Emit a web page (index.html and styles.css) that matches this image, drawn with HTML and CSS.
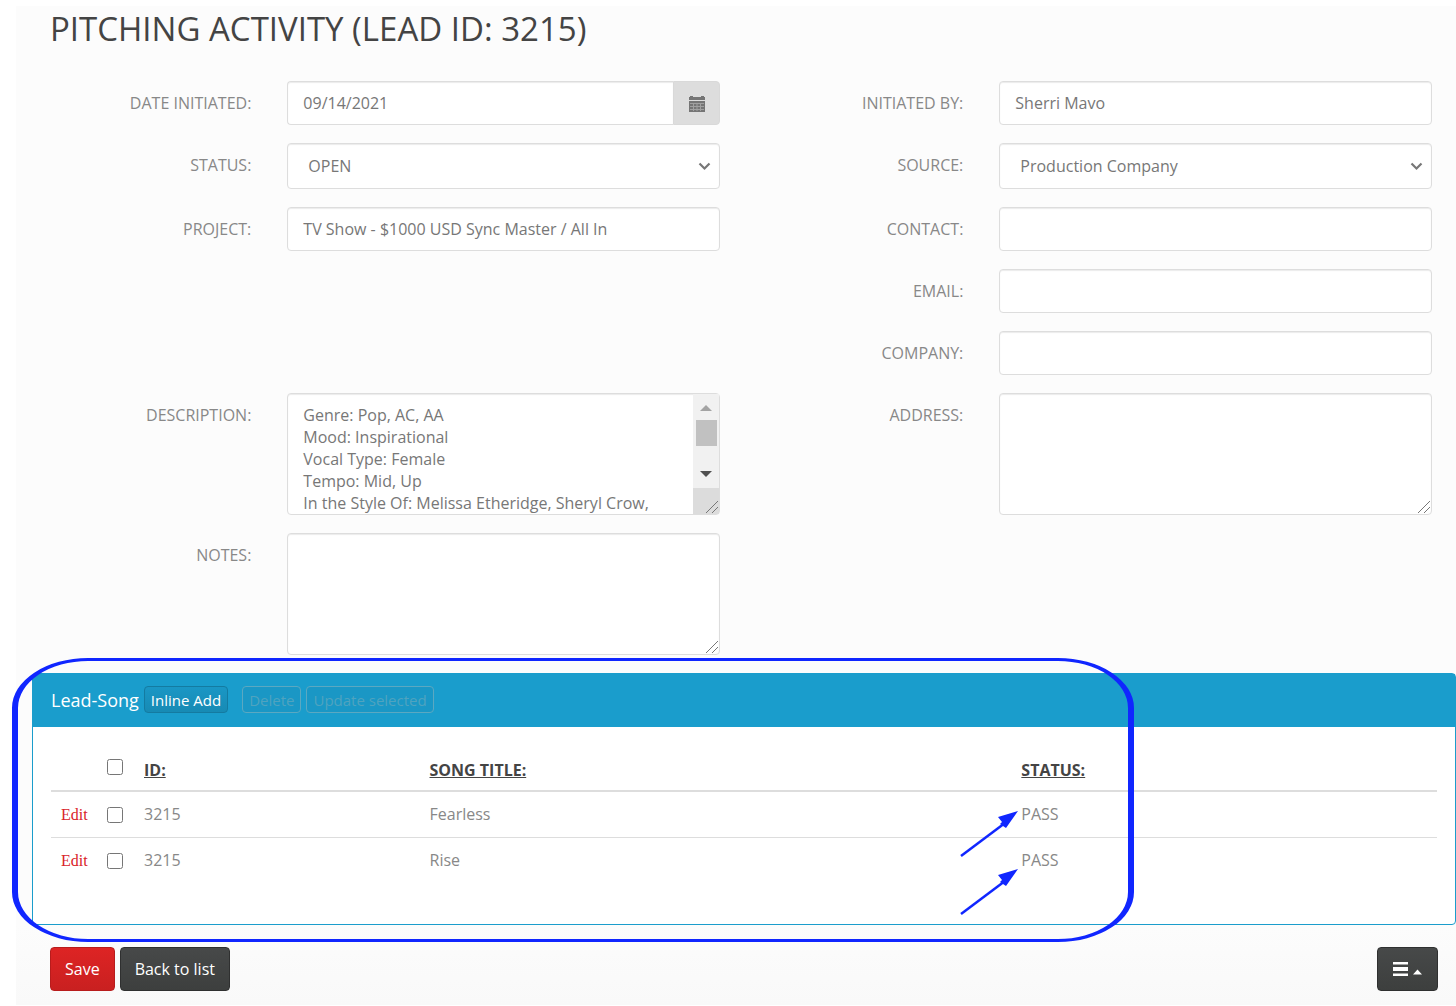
FILE: index.html
```html
<!DOCTYPE html>
<html lang="en">
<head>
<meta charset="utf-8">
<title>Pitching Activity</title>
<link rel="stylesheet" href="styles.css">
</head>
<body>
<main class="page">
  <h1>PITCHING ACTIVITY (LEAD ID: 3215)</h1>
  <form>
    <div class="fields">
      <div class="field left">
        <label for="date">DATE INITIATED:</label>
        <div class="control group">
          <input id="date" class="input" type="text" value="09/14/2021">
          <button class="addon" type="button" aria-label="Choose date">
            <svg width="16" height="17" viewBox="0 0 16 17"><path fill="#757575" d="M0 2h1V1h3v1h8V1h3v1h1v3H0zM0 6h16v11H0z"/><path stroke="#a0a0a0" d="M1 8.500h14M1 11.500h14M1 14.500h14M4.500 8v8M8 8v8M11.500 8v8"/></svg>
          </button>
        </div>
      </div>
      <div class="field right">
        <label for="by">INITIATED BY:</label>
        <div class="control"><input id="by" class="input" type="text" value="Sherri Mavo"></div>
      </div>
      <div class="field left">
        <label for="status">STATUS:</label>
        <div class="control">
          <select id="status" class="input select"><option>OPEN</option></select>
          <svg class="chevron" width="13" height="9" viewBox="0 0 13 9"><path d="M1.500 1.500l5 5 5-5" fill="none" stroke="#777" stroke-width="2.200"/></svg>
        </div>
      </div>
      <div class="field right">
        <label for="source">SOURCE:</label>
        <div class="control">
          <select id="source" class="input select"><option>Production Company</option></select>
          <svg class="chevron" width="13" height="9" viewBox="0 0 13 9"><path d="M1.500 1.500l5 5 5-5" fill="none" stroke="#777" stroke-width="2.200"/></svg>
        </div>
      </div>
      <div class="field left">
        <label for="project">PROJECT:</label>
        <div class="control"><input id="project" class="input" type="text" value="TV Show - $1000 USD Sync Master / All In"></div>
      </div>
      <div class="field right">
        <label for="contact">CONTACT:</label>
        <div class="control"><input id="contact" class="input" type="text"></div>
      </div>
      <div class="field right">
        <label for="email">EMAIL:</label>
        <div class="control"><input id="email" class="input" type="text"></div>
      </div>
      <div class="field right">
        <label for="company">COMPANY:</label>
        <div class="control"><input id="company" class="input" type="text"></div>
      </div>
      <div class="field left">
        <label for="description">DESCRIPTION:</label>
        <div class="control">
          <textarea id="description" class="input area scrolled">Genre: Pop, AC, AA
Mood: Inspirational
Vocal Type: Female
Tempo: Mid, Up
In the Style Of: Melissa Etheridge, Sheryl Crow,</textarea>
          <div class="scrollbar">
            <span class="arrow up"></span><span class="thumb"></span><span class="arrow down"></span><span class="corner"></span>
          </div>
          <svg class="grip" width="14" height="14" viewBox="0 0 14 14"><path d="M1 13L13 1M7 13l6-6" stroke="#777" fill="none"/></svg>
        </div>
      </div>
      <div class="field right">
        <label for="address">ADDRESS:</label>
        <div class="control">
          <textarea id="address" class="input area"></textarea>
          <svg class="grip" width="14" height="14" viewBox="0 0 14 14"><path d="M1 13L13 1M7 13l6-6" stroke="#777" fill="none"/></svg>
        </div>
      </div>
      <div class="field left">
        <label for="notes">NOTES:</label>
        <div class="control">
          <textarea id="notes" class="input area"></textarea>
          <svg class="grip" width="14" height="14" viewBox="0 0 14 14"><path d="M1 13L13 1M7 13l6-6" stroke="#777" fill="none"/></svg>
        </div>
      </div>
    </div>

    <section class="panel">
      <header class="panel-head">
        <h2>Lead-Song</h2>
        <button class="small add" type="button">Inline Add</button>
        <button class="small" type="button" disabled>Delete</button>
        <button class="small" type="button" disabled>Update selected</button>
      </header>
      <div class="panel-body">
        <table>
          <colgroup><col class="c-edit"><col class="c-check"><col class="c-id"><col class="c-song"><col></colgroup>
          <thead>
            <tr><th></th><th><input type="checkbox" aria-label="Select all"></th><th><a href="#">ID:</a></th><th><a href="#">SONG TITLE:</a></th><th><a href="#">STATUS:</a></th></tr>
          </thead>
          <tbody>
            <tr><td><a class="edit" href="#">Edit</a></td><td><input type="checkbox" aria-label="Select Fearless"></td><td>3215</td><td>Fearless</td><td>PASS</td></tr>
            <tr><td><a class="edit" href="#">Edit</a></td><td><input type="checkbox" aria-label="Select Rise"></td><td>3215</td><td>Rise</td><td>PASS</td></tr>
          </tbody>
        </table>
      </div>
      <div class="callout"></div>
      <svg class="pointer first" width="60" height="48" viewBox="0 0 60 48"><path d="M2 46L46 13" stroke="#1026ff" stroke-width="2.500"/><path d="M59 1L39 7l4 5-2 2 6 4z" fill="#1026ff"/></svg>
      <svg class="pointer second" width="60" height="48" viewBox="0 0 60 48"><path d="M2 46L46 13" stroke="#1026ff" stroke-width="2.500"/><path d="M59 1L39 7l4 5-2 2 6 4z" fill="#1026ff"/></svg>
    </section>

    <footer class="actions">
      <button class="btn save" type="submit">Save</button>
      <button class="btn" type="button">Back to list</button>
      <button class="btn menu" type="button" aria-label="Menu">
        <svg width="31" height="14" viewBox="0 0 31 14"><path fill="#fff" d="M1 0h15v2.500H1zM1 5h15v4H1zM1 11.500h15v2.500H1zM21 12.500l4.500-5 4.500 5z"/></svg>
      </button>
    </footer>
  </form>
</main>
</body>
</html>
```
FILE: styles.css
```css
* { box-sizing: border-box; }
body {
  margin: 0;
  background: #fff;
  color: #888;
  font: 16px/22px "Open Sans", sans-serif;
}
.page {
  margin: 6px 0 0 16px;
  padding: 0 0 14px 16px;
  background: linear-gradient(#fcfcfc, #fcfcfc 92%, #f9f9f9);
}
h1 {
  margin: 0;
  padding: 3px 18px 32px;
  font-size: 33px;
  line-height: 40px;
  font-weight: 400;
  color: #444;
}
form { margin: 0; }
.fields {
  display: grid;
  grid-template-columns: 1fr 1fr;
  row-gap: 18px;
}
.left { grid-column: 1; }
.right { grid-column: 2; }
.field {
  display: grid;
  grid-template-columns: 1fr 2fr;
}
.field label {
  padding: 11px 18px 0 0;
  text-align: right;
}
.control {
  position: relative;
  margin: 0 24px 0 18px;
}
.group { display: flex; }
.input {
  display: block;
  width: 100%;
  height: 44px;
  margin: 0;
  padding: 10px 15px;
  border: 1px solid #ddd;
  border-radius: 4px;
  background: #fff;
  box-shadow: inset 0 1px 1px rgba(0, 0, 0, .08);
  color: #777;
  font: inherit;
}
.group .input {
  flex: 1;
  min-width: 0;
  border-right: 0;
  border-radius: 4px 0 0 4px;
}
.addon {
  display: grid;
  place-items: center;
  width: 47px;
  padding: 0;
  border: 1px solid #d9d9d9;
  border-radius: 0 4px 4px 0;
  background: #ddd;
}
.select {
  height: 46px;
  padding: 10px 20px;
  appearance: none;
}
.chevron {
  position: absolute;
  right: 9px;
  top: 19px;
}
.area {
  height: 122px;
  overflow: hidden;
  resize: none;
}
.scrolled { padding-right: 42px; }
.grip {
  position: absolute;
  right: 1px;
  bottom: 1px;
}
.scrollbar {
  position: absolute;
  top: 1px;
  right: 1px;
  bottom: 1px;
  width: 26px;
  display: flex;
  flex-direction: column;
  align-items: center;
  background: #f1f1f1;
}
.arrow {
  border: 6px solid transparent;
}
.up {
  margin: 11px 0 9px;
  border-top: 0;
  border-bottom-color: #a3a3a3;
}
.thumb {
  width: 21px;
  height: 26px;
  background: #c1c1c1;
}
.down {
  margin-top: 25px;
  border-bottom: 0;
  border-top-color: #505050;
}
.corner {
  width: 100%;
  height: 26px;
  margin-top: auto;
  background: #dcdcdc;
}
.panel {
  position: relative;
  margin-top: 18px;
  border: 1px solid #1a9dcc;
  border-radius: 4px;
  background: #fff;
}
.panel-head {
  display: flex;
  align-items: center;
  gap: 5px;
  height: 53px;
  padding: 0 18px 2px;
  background: #1a9dcc;
}
h2 {
  margin: 0;
  font-size: 18px;
  line-height: 24px;
  font-weight: 400;
  color: #fff;
}
.small {
  height: 27px;
  padding: 0 6px;
  border: 1px solid #5ba8c1;
  border-radius: 4px;
  background: #1a97c5;
  color: #4fa3bf;
  font: 15px/20px "Open Sans", sans-serif;
}
.add {
  margin-right: 9px;
  border-color: #147ba1;
  background: linear-gradient(#1a97c5, #178ab4);
  color: #fff;
}
.panel-body { padding: 18px 18px 41px; }
table {
  width: 100%;
  table-layout: fixed;
  border-collapse: collapse;
}
.c-edit { width: 46px; }
.c-check { width: 37px; }
.c-id { width: 20.6%; }
.c-song { width: 42.7%; }
th, td {
  height: 46px;
  padding: 11px 10px 0;
  vertical-align: top;
  text-align: left;
  white-space: nowrap;
}
th {
  padding-top: 14px;
  border-bottom: 2px solid #ddd;
}
td { border-bottom: 1px solid #ddd; }
tbody tr:last-child td { border-bottom: 0; }
th a { color: #444; }
td .edit {
  display: block;
  font: 16px/24px "Liberation Serif", serif;
  color: #d92329;
  text-decoration: none;
}
input[type="checkbox"] {
  display: block;
  width: 16px;
  height: 16px;
  margin: 0;
}
td input[type="checkbox"] { margin-top: 4px; }
.callout {
  position: absolute;
  left: -21px;
  top: -16px;
  width: 1122px;
  height: 284px;
  border: solid #1026ff;
  border-width: 3px 6px;
  border-radius: 76px / 50px;
  pointer-events: none;
}
.pointer {
  position: absolute;
  left: 926px;
}
.first { top: 136px; }
.second { top: 194px; }
.actions {
  display: flex;
  gap: 5px;
  padding: 22px 18px 0;
}
.btn {
  height: 44px;
  padding: 0 14px;
  border: 1px solid #2f3030;
  border-radius: 4px;
  background: linear-gradient(#474949, #3d3f3e);
  color: #fff;
  font: 16px/22px "Open Sans", sans-serif;
}
.save {
  border-color: #b81c1c;
  background: linear-gradient(#de2424, #c92020);
}
.menu {
  display: flex;
  align-items: center;
  margin-left: auto;
}
```
